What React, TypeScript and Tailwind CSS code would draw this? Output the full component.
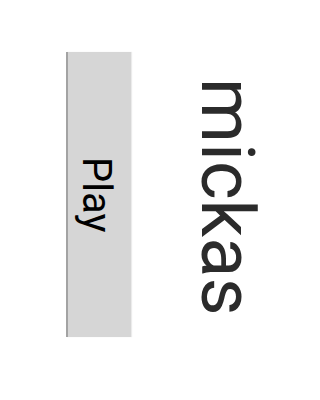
export default function App() {
  return (
    <div className="flex h-[400px] w-[274px] bg-white pt-[52px] pl-[66px]">
      <button
        type="button"
        className="flex h-[285px] w-[65px] items-center justify-center border-l-2 border-[#a3a3a3] bg-[#d6d6d6] pr-[8px] shadow-[1px_0_1px_rgba(0,0,0,0.08)]"
      >
        <span className="font-['Roboto',sans-serif] text-[40px] leading-none text-black [writing-mode:vertical-rl]">
          Play
        </span>
      </button>
      <div className="ml-auto mr-[10px] pt-[26px]">
        <span className="block font-['Roboto',sans-serif] text-[74px] leading-none text-[#2b2b2b] [writing-mode:vertical-rl]">
          mickas
        </span>
      </div>
    </div>
  );
}
